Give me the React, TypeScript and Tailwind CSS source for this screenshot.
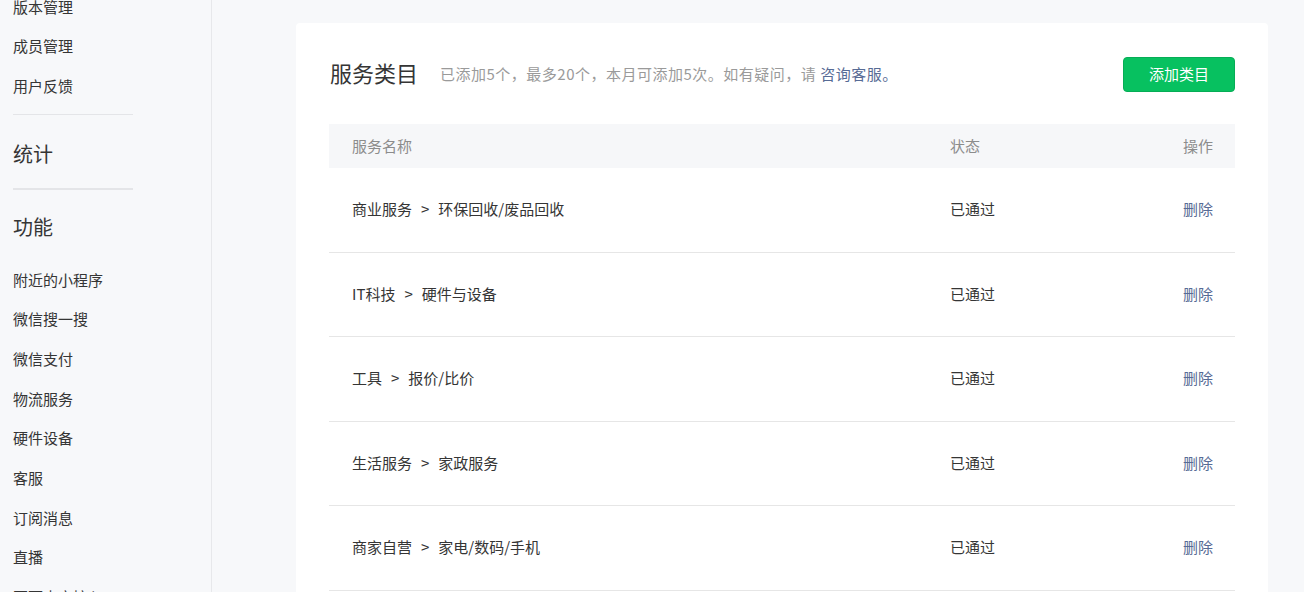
import React from "react";

const topItems = ["版本管理", "成员管理", "用户反馈"];
const featureItems = [
  "附近的小程序",
  "微信搜一搜",
  "微信支付",
  "物流服务",
  "硬件设备",
  "客服",
  "订阅消息",
  "直播",
  "页面内容接入",
];

const rows = [
  ["商业服务", "环保回收/废品回收"],
  ["IT科技", "硬件与设备"],
  ["工具", "报价/比价"],
  ["生活服务", "家政服务"],
  ["商家自营", "家电/数码/手机"],
];

function Sidebar() {
  return (
    <aside className="w-[212px] shrink-0 border-r border-[#e7e8eb] pl-[13px] text-[#353535]">
      <div className="-mt-[13px]">
        {topItems.map((t) => (
          <div key={t} className="h-[39.5px] flex items-center text-[15px]">
            {t}
          </div>
        ))}
      </div>
      <div className="mt-[8.5px] w-[120px] h-px bg-[#e4e5e8]" />
      <div className="h-[73px] flex items-center pt-[5px] text-[20px]">统计</div>
      <div className="w-[120px] h-[2px] bg-[#e4e5e8]" />
      <div className="h-[70px] flex items-center pt-[4px] text-[20px]">功能</div>
      {featureItems.map((t) => (
        <div key={t} className="h-[39.7px] flex items-center text-[15px]">
          {t}
        </div>
      ))}
    </aside>
  );
}

export default function App() {
  return (
    <div className="h-[592px] overflow-hidden flex bg-[#f7f8fa] font-['Noto_Sans_CJK_SC',sans-serif]">
      <Sidebar />
      <main className="flex-1 pl-[84px] pr-[36px] pt-[23px]">
        <section className="bg-white rounded-[4px] px-[33px] pt-[34px] pb-8">
          <div className="flex items-center h-[35px]">
            <h2 className="text-[22px] text-[#353535] pl-px -mt-[5px]">服务类目</h2>
            <p className="ml-[22px] text-[15px] tracking-[0.5px] text-[#9a9a9a] -mt-[1px]">
              已添加5个，最多20个，本月可添加5次。如有疑问，请{" "}
              <a className="text-[#576b95]">咨询客服。</a>
            </p>
            <button className="ml-auto w-[112px] h-[35px] rounded-[4px] bg-[#07c160] border border-[#06ad56] text-white text-[15px]">
              添加类目
            </button>
          </div>

          <div className="mt-[32px] text-[15px]">
            <div className="grid grid-cols-[621px_1fr_auto] items-center h-[44px] bg-[#f6f7f9] text-[#8c8c8c]">
              <div className="pl-[23px]">服务名称</div>
              <div>状态</div>
              <div className="pr-[22px] text-right">操作</div>
            </div>
            {rows.map(([a, b]) => (
              <div
                key={a}
                className="grid grid-cols-[621px_1fr_auto] items-center h-[84.5px] border-b border-[#e6e6e6] text-[#353535]"
              >
                <div className="pl-[23px] -mt-px">
                  {a}
                  <span className="mx-[9px]">&gt;</span>
                  {b}
                </div>
                <div className="-mt-px">已通过</div>
                <div className="pr-[22px] text-right text-[#576b95] -mt-px">删除</div>
              </div>
            ))}
          </div>
        </section>
      </main>
    </div>
  );
}
